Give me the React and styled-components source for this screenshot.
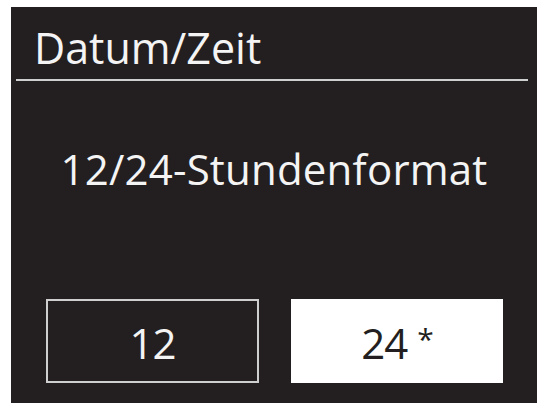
import React from "react";
import styled, { createGlobalStyle } from "styled-components";

const GlobalStyle = createGlobalStyle`
  html, body {
    margin: 0;
    padding: 0;
    background: #ffffff;
  }
  body {
    font-family: "Open Sans", "Liberation Sans", sans-serif;
  }
`;

const options = [
  { label: "12", active: false, current: false },
  { label: "24", active: true, current: true },
];

function App() {
  return (
    <>
      <GlobalStyle />
      <Screen>
        <Header>
          <Title>Datum/Zeit</Title>
        </Header>
        <Divider />
        <Question>12/24-Stundenformat</Question>
        <OptionRow>
          {options.map((opt) => (
            <Option key={opt.label} active={opt.active}>
              {opt.label}
              {opt.current && <Mark>*</Mark>}
            </Option>
          ))}
        </OptionRow>
      </Screen>
    </>
  );
}

export default App;

const Screen = styled.div`
  box-sizing: border-box;
  margin: 7px 3px 0 11px;
  height: 396px;
  background-color: #231f20;
  color: #f4f4f4;
  display: flex;
  flex-direction: column;
  overflow: hidden;
`;

const Header = styled.div`
  padding: 16px 0 0 23px;
`;

const Title = styled.h1`
  margin: 0;
  font-size: 43px;
  font-weight: 400;
  line-height: 50px;
`;

const Divider = styled.div`
  height: 2px;
  margin: 6px 9px 0 5px;
  background-color: #cfcfcf;
`;

const Question = styled.div`
  margin-top: 63px;
  text-align: center;
  font-size: 42px;
  line-height: 50px;
  letter-spacing: 0.2px;
`;

const OptionRow = styled.div`
  display: grid;
  grid-template-columns: 213px 212px;
  column-gap: 32px;
  padding: 0 34px 0 35px;
  margin-top: 105px;
`;

const Option = styled.div`
  box-sizing: border-box;
  height: 84px;
  display: flex;
  align-items: center;
  justify-content: center;
  font-size: 42px;
  line-height: 50px;
  letter-spacing: -1px;
  padding-top: 3px;
  border: 2px solid ${(p) => (p.active ? "#ffffff" : "#cfcfcf")};
  background-color: ${(p) => (p.active ? "#ffffff" : "transparent")};
  color: ${(p) => (p.active ? "#231f20" : "#f4f4f4")};
`;

const Mark = styled.span`
  align-self: flex-start;
  margin: 20px 0 0 10px;
  font-size: 30px;
  line-height: 30px;
`;
